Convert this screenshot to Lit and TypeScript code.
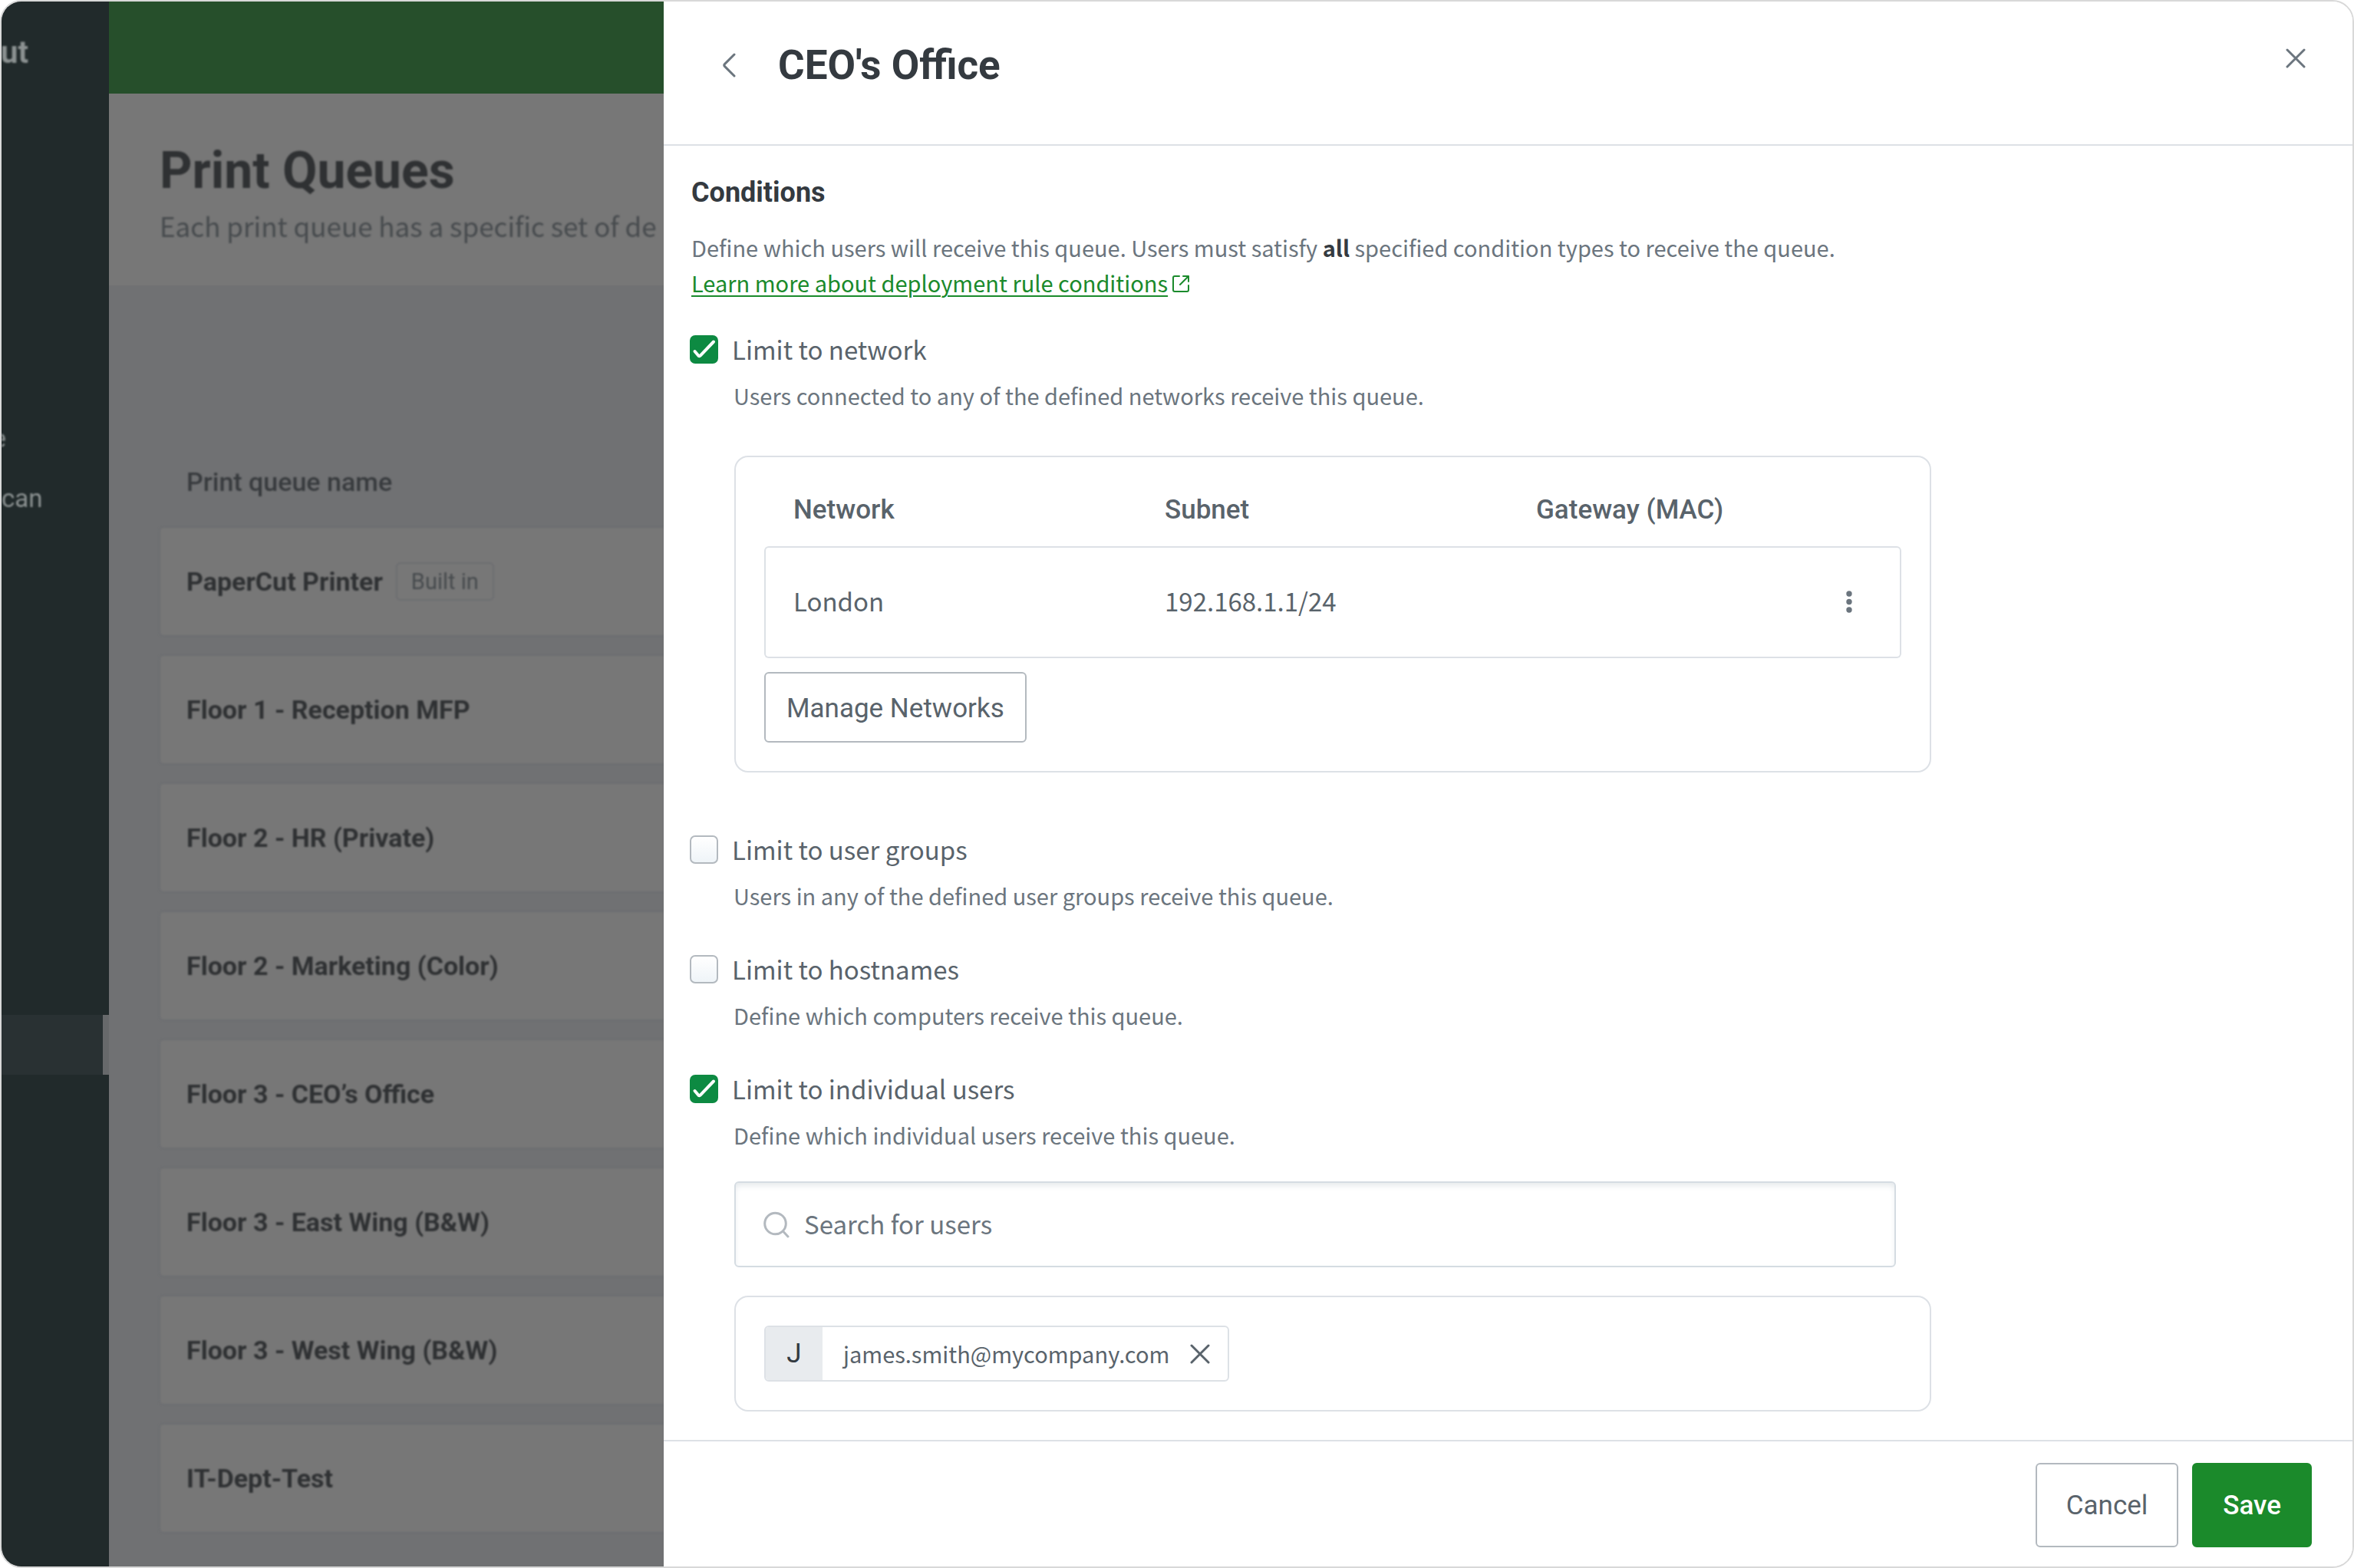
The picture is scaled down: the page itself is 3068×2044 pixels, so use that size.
import { LitElement, html, css, svg, nothing } from "lit";
import { customElement, property, state } from "lit/decorators.js";

const shared = css`
  :host {
    display: block;
    box-sizing: border-box;
    --heading: Roboto, "Liberation Sans", sans-serif;
    --body: "Noto Sans CJK JP", "Noto Sans", sans-serif;
    --ink: #343a40;
    --text: #59636b;
    --muted: #6b757e;
    --line: #dde1e6;
    --line-strong: #b3b9bf;
    --green: #1a8a2b;
  }
  *,
  *::before,
  *::after {
    box-sizing: border-box;
  }
  h1,
  h2,
  p,
  ul {
    margin: 0;
    padding: 0;
  }
  button,
  input {
    font: inherit;
    margin: 0;
  }
  svg {
    display: block;
    fill: none;
    stroke: currentColor;
    stroke-linecap: round;
    stroke-linejoin: round;
  }
  .icon-button {
    display: grid;
    place-items: center;
    padding: 0;
    border: 0;
    background: none;
    color: var(--muted);
    cursor: pointer;
  }
`;

interface Queue {
  name: string;
  badge?: string;
}

const QUEUES: Queue[] = [
  { name: "PaperCut Printer", badge: "Built in" },
  { name: "Floor 1 - Reception MFP" },
  { name: "Floor 2 - HR (Private)" },
  { name: "Floor 2 - Marketing (Color)" },
  { name: "Floor 3 - CEO’s Office" },
  { name: "Floor 3 - East Wing (B&W)" },
  { name: "Floor 3 - West Wing (B&W)" },
  { name: "IT-Dept-Test" },
];

/** The dimmed page that lies behind the open drawer. */
@customElement("queue-page")
export class QueuePage extends LitElement {
  static styles = [
    shared,
    css`
      :host {
        display: grid;
        grid-template-columns: 140px minmax(0, 1fr);
        overflow: hidden;
        white-space: nowrap;
        background: #707173;
        font-family: var(--heading);
      }
      .sidebar {
        display: flex;
        flex-direction: column;
        align-items: flex-start;
        padding-top: 43px;
        background: #212a2b;
        color: #8b9191;
      }
      .clip {
        display: flex;
        justify-content: flex-end;
        overflow: hidden;
        font-size: 33px;
        line-height: 44px;
        filter: blur(1px);
      }
      .brand {
        width: 35px;
        font-size: 40px;
        line-height: 48px;
        font-weight: 700;
      }
      .mark {
        width: 5px;
        height: 5px;
        margin-top: 11px;
        border-radius: 50%;
        background: #5d6566;
      }
      .short {
        width: 6px;
        margin-top: 457px;
      }
      .long {
        width: 56px;
        justify-content: flex-start;
        margin-top: 34px;
      }
      .active {
        align-self: stretch;
        height: 78px;
        margin-top: 651px;
        background: #293133;
        border-right: 8px solid #67696b;
      }
      .topbar {
        height: 120px;
        background: #264f2b;
      }
      .intro {
        padding: 61px 0 53px 66px;
        background: #777777;
      }
      h1 {
        font-size: 66px;
        line-height: 80px;
        font-weight: 700;
        color: #2f3133;
        filter: blur(1px);
      }
      .lead {
        margin-top: 6px;
        font-family: var(--body);
        font-size: 35px;
        line-height: 50px;
        color: #474b4e;
        filter: blur(1px);
      }
      .list {
        padding: 234px 0 36px 65px;
      }
      .column {
        padding-left: 36px;
        font-size: 34px;
        line-height: 44px;
        font-weight: 500;
        color: #383b3e;
        filter: blur(1px);
      }
      .cards {
        display: grid;
        gap: 23px;
        margin-top: 36px;
        list-style: none;
        filter: blur(1px);
      }
      .card {
        display: flex;
        align-items: center;
        gap: 17px;
        height: 144px;
        padding-left: 34px;
        border: 2px solid #6c6e71;
        border-right: 0;
        border-radius: 6px 0 0 6px;
        background: #777777;
        color: #2f3133;
        font-size: 34px;
        line-height: 44px;
        font-weight: 700;
      }
      .badge {
        padding: 0 18px;
        border: 2px solid #6c6e71;
        border-radius: 6px;
        font-size: 29px;
        line-height: 46px;
        font-weight: 400;
        color: #474b4e;
      }
    `,
  ];

  render() {
    return html`
      <nav class="sidebar">
        <div class="clip brand">ut<span class="mark"></span></div>
        <div class="clip short">e</div>
        <div class="clip long">can</div>
        <div class="active"></div>
      </nav>
      <main>
        <div class="topbar"></div>
        <div class="intro">
          <h1>Print Queues</h1>
          <p class="lead">Each print queue has a specific set of de</p>
        </div>
        <div class="list">
          <p class="column">Print queue name</p>
          <ul class="cards">
            ${QUEUES.map(
              (q) => html`<li class="card">
                <span>${q.name}</span>
                ${q.badge ? html`<span class="badge">${q.badge}</span>` : nothing}
              </li>`
            )}
          </ul>
        </div>
      </main>
    `;
  }
}

/** A tick box with its label, help text and, when given, nested content. */
@customElement("condition-group")
export class ConditionGroup extends LitElement {
  @property() label = "";
  @property() help = "";
  @property({ type: Boolean }) checked = false;

  static styles = [
    shared,
    css`
      .row {
        display: flex;
        align-items: center;
        gap: 18px;
        font-family: var(--body);
        font-size: 33px;
        line-height: 44px;
        color: var(--text);
      }
      .box {
        display: grid;
        width: 37px;
        height: 37px;
      }
      .box > * {
        grid-area: 1 / 1;
        width: 37px;
        height: 37px;
      }
      .box svg {
        color: #ffffff;
        stroke-width: 4;
        pointer-events: none;
      }
      input {
        appearance: none;
        border: 2px solid var(--line-strong);
        border-radius: 7px;
        background: linear-gradient(#ffffff, #eff4f8);
      }
      input:checked {
        border-color: #0d8a42;
        background: #0d8a42;
      }
      .help {
        margin-top: 15px;
        padding-left: 57px;
        font-family: var(--body);
        font-size: 29px;
        line-height: 46px;
        color: var(--muted);
      }
      .content {
        padding-left: 58px;
      }
    `,
  ];

  private toggle(e: Event) {
    this.checked = (e.target as HTMLInputElement).checked;
  }

  render() {
    return html`
      <div class="row">
        <span class="box">
          <input
            id="check"
            type="checkbox"
            aria-describedby="help"
            .checked=${this.checked}
            @change=${this.toggle}
          />
          ${this.checked
            ? html`<svg viewBox="0 0 37 37" aria-hidden="true">
                <path d="M6.5 21 L11.4 26.8 Q12.6 28 13.7 26.6 L31 8.5" />
              </svg>`
            : nothing}
        </span>
        <label for="check">${this.label}</label>
      </div>
      <p class="help" id="help">${this.help}</p>
      <div class="content"><slot></slot></div>
    `;
  }
}

const cross = (size: number, width: number) => html`<svg
  width=${size}
  height=${size}
  viewBox="0 0 26 26"
  stroke-width=${width}
  aria-hidden="true"
>
  ${svg`<path d="M2 2 L24 24 M24 2 L2 24" />`}
</svg>`;

const NETWORKS = [{ name: "London", subnet: "192.168.1.1/24", gateway: "" }];

/** The drawer in which a queue's deployment conditions are edited. */
@customElement("queue-drawer")
export class QueueDrawer extends LitElement {
  @state() private users = ["james.smith@mycompany.com"];

  static styles = [
    shared,
    css`
      :host {
        display: flex;
        flex-direction: column;
        background: #ffffff;
        color: var(--text);
        font-family: var(--body);
      }
      .head {
        display: flex;
        align-items: flex-start;
        gap: 31px;
        padding: 51px 52px 71px;
        border-bottom: 2px solid var(--line);
      }
      .back {
        width: 66px;
        height: 64px;
      }
      h1 {
        flex: 1;
        font-family: var(--heading);
        font-size: 53px;
        line-height: 64px;
        font-weight: 700;
        color: var(--ink);
      }
      .close {
        width: 44px;
        height: 46px;
      }
      .body {
        flex: 1;
        padding: 39px 34px 37px;
      }
      h2 {
        padding-left: 2px;
        font-family: var(--heading);
        font-size: 36px;
        line-height: 44px;
        font-weight: 700;
        color: var(--ink);
      }
      .about {
        margin: 26px 0 42px;
        padding-left: 2px;
        font-size: 29px;
        line-height: 46px;
        color: var(--muted);
      }
      .about strong {
        color: var(--ink);
      }
      .about a {
        color: var(--green);
        text-decoration-thickness: 2px;
        text-underline-offset: 4px;
      }
      .about svg {
        display: inline-block;
        margin-left: 6px;
        color: var(--green);
      }
      .groups {
        display: grid;
        gap: 51px;
      }
      .panel {
        max-width: 1560px;
        border: 2px solid var(--line);
        border-radius: 18px;
      }
      .networks {
        margin: 56px 0 27px;
        padding: 21px 37px 37px;
      }
      table {
        width: 100%;
        table-layout: fixed;
        border-collapse: separate;
        border-spacing: 0;
        font-size: 33px;
        line-height: 44px;
      }
      .wide {
        width: 32.66%;
      }
      .narrow {
        width: 9%;
      }
      th {
        height: 95px;
        padding: 0 0 0 38px;
        text-align: left;
        font-family: var(--heading);
        font-size: 35px;
        font-weight: 500;
      }
      td {
        height: 146px;
        padding: 0 0 4px 38px;
        border: solid var(--line);
        border-width: 2px 0;
      }
      td:first-child {
        padding-left: 36px;
        border-left-width: 2px;
        border-radius: 6px 0 0 6px;
      }
      td:last-child {
        padding: 0;
        border-right-width: 2px;
        border-radius: 0 6px 6px 0;
      }
      .more {
        width: 100%;
        height: 60px;
      }
      .more svg {
        fill: currentColor;
        stroke: none;
      }
      .button {
        height: 110px;
        padding: 2px 38px 0;
        border: 2px solid var(--line-strong);
        border-radius: 6px;
        background: #ffffff;
        color: var(--text);
        font-family: var(--heading);
        font-size: 35px;
        line-height: 44px;
        cursor: pointer;
      }
      .manage {
        display: block;
        height: 92px;
        margin-top: 18px;
        padding: 3px 27px 0;
      }
      .primary {
        border-color: #1b8a2b;
        background: #1b8a2b;
        color: #ffffff;
        font-weight: 500;
      }
      .search {
        display: flex;
        align-items: center;
        gap: 19px;
        max-width: 1514px;
        height: 112px;
        margin: 38px 0 37px;
        padding: 0 36px;
        border: 2px solid #d5dce2;
        border-radius: 6px;
        box-shadow: inset 0 5px 8px -2px #e3e7ea;
        color: var(--line-strong);
      }
      .search input {
        flex: 1;
        min-width: 0;
        height: 60px;
        padding: 0 0 2px;
        border: 0;
        outline: 0;
        background: none;
        color: var(--text);
        font-size: 33px;
      }
      .search input::placeholder {
        color: var(--muted);
        opacity: 1;
      }
      .users {
        display: flex;
        flex-wrap: wrap;
        gap: 18px;
        min-height: 151px;
        padding: 37px;
      }
      .chip {
        display: flex;
        align-items: stretch;
        height: 73px;
        border: 2px solid var(--line);
        border-radius: 6px;
        overflow: hidden;
      }
      .initial {
        display: grid;
        place-items: center;
        width: 74px;
        background: #e8ebee;
        color: var(--ink);
        font-family: var(--heading);
        font-size: 35px;
      }
      .email {
        align-self: center;
        padding: 0 0 2px 27px;
        font-size: 29px;
        line-height: 46px;
      }
      .remove {
        width: 76px;
        padding-left: 4px;
        color: var(--text);
      }
      .foot {
        display: flex;
        justify-content: flex-end;
        gap: 18px;
        padding: 28px 53px 25px;
        border-top: 2px solid var(--line);
      }
    `,
  ];

  private remove(user: string) {
    this.users = this.users.filter((u) => u !== user);
  }

  render() {
    return html`
      <header class="head">
        <button class="icon-button back" type="button" aria-label="Back">
          <svg width="18" height="32" viewBox="0 0 18 32" stroke-width="3" aria-hidden="true">
            <path d="M16 2 L3.4 14.6 Q2 16 3.4 17.4 L16 30" />
          </svg>
        </button>
        <h1>CEO's Office</h1>
        <button class="icon-button close" type="button" aria-label="Close">${cross(26, 3)}</button>
      </header>

      <section class="body">
        <h2>Conditions</h2>
        <p class="about">
          Define which users will receive this queue. Users must satisfy <strong>all</strong>
          specified condition types to receive the queue.<br />
          <a href="#conditions">Learn more about deployment rule conditions</a
          ><svg width="22" height="22" viewBox="0 0 22 22" stroke-width="2" aria-hidden="true">
            <path d="M9 1 H3 Q1 1 1 3 V19 Q1 21 3 21 H19 Q21 21 21 19 V13" />
            <path d="M14 1 H21 V8 M21 1 L10 12" />
          </svg>
        </p>

        <div class="groups">
          <condition-group
            checked
            label="Limit to network"
            help="Users connected to any of the defined networks receive this queue."
          >
            <div class="panel networks">
              <table>
                <colgroup>
                  <col class="wide" />
                  <col class="wide" />
                  <col />
                  <col class="narrow" />
                </colgroup>
                <thead>
                  <tr>
                    <th scope="col">Network</th>
                    <th scope="col">Subnet</th>
                    <th scope="col" colspan="2">Gateway (MAC)</th>
                  </tr>
                </thead>
                <tbody>
                  ${NETWORKS.map(
                    (n) => html`<tr>
                      <td>${n.name}</td>
                      <td>${n.subnet}</td>
                      <td>${n.gateway}</td>
                      <td>
                        <button class="icon-button more" type="button" aria-label="More">
                          <svg width="8" height="30" viewBox="0 0 8 30" aria-hidden="true">
                            <circle cx="4" cy="4" r="3.7" />
                            <circle cx="4" cy="14.5" r="3.7" />
                            <circle cx="4" cy="25" r="3.7" />
                          </svg>
                        </button>
                      </td>
                    </tr>`
                  )}
                </tbody>
              </table>
              <button class="button manage" type="button">Manage Networks</button>
            </div>
          </condition-group>

          <condition-group
            label="Limit to user groups"
            help="Users in any of the defined user groups receive this queue."
          ></condition-group>

          <condition-group
            label="Limit to hostnames"
            help="Define which computers receive this queue."
          ></condition-group>

          <condition-group
            checked
            label="Limit to individual users"
            help="Define which individual users receive this queue."
          >
            <label class="search">
              <svg width="34" height="35" viewBox="0 0 34 35" stroke-width="3" aria-hidden="true">
                <circle cx="15.5" cy="16" r="13.8" />
                <path d="M25.5 26 L32 33" />
              </svg>
              <input type="search" placeholder="Search for users" aria-label="Search for users" />
            </label>
            <div class="panel users">
              ${this.users.map(
                (u) => html`<div class="chip">
                  <span class="initial">${u[0].toUpperCase()}</span>
                  <span class="email">${u}</span>
                  <button
                    class="icon-button remove"
                    type="button"
                    aria-label="Remove"
                    @click=${() => this.remove(u)}
                  >
                    ${cross(26, 3)}
                  </button>
                </div>`
              )}
            </div>
          </condition-group>
        </div>
      </section>

      <footer class="foot">
        <button class="button" type="button">Cancel</button>
        <button class="button primary" type="button">Save</button>
      </footer>
    `;
  }
}

@customElement("app-root")
export class AppRoot extends LitElement {
  static styles = [
    shared,
    css`
      .frame {
        display: grid;
        grid-template-columns: minmax(0, 863fr) minmax(0, 2201fr);
        min-height: 100vh;
        border: 2px solid #d8d8d8;
        border-radius: 28px;
        overflow: hidden;
        background: #ffffff;
      }
    `,
  ];

  render() {
    return html`
      <div class="frame">
        <queue-page></queue-page>
        <queue-drawer></queue-drawer>
      </div>
    `;
  }
}
